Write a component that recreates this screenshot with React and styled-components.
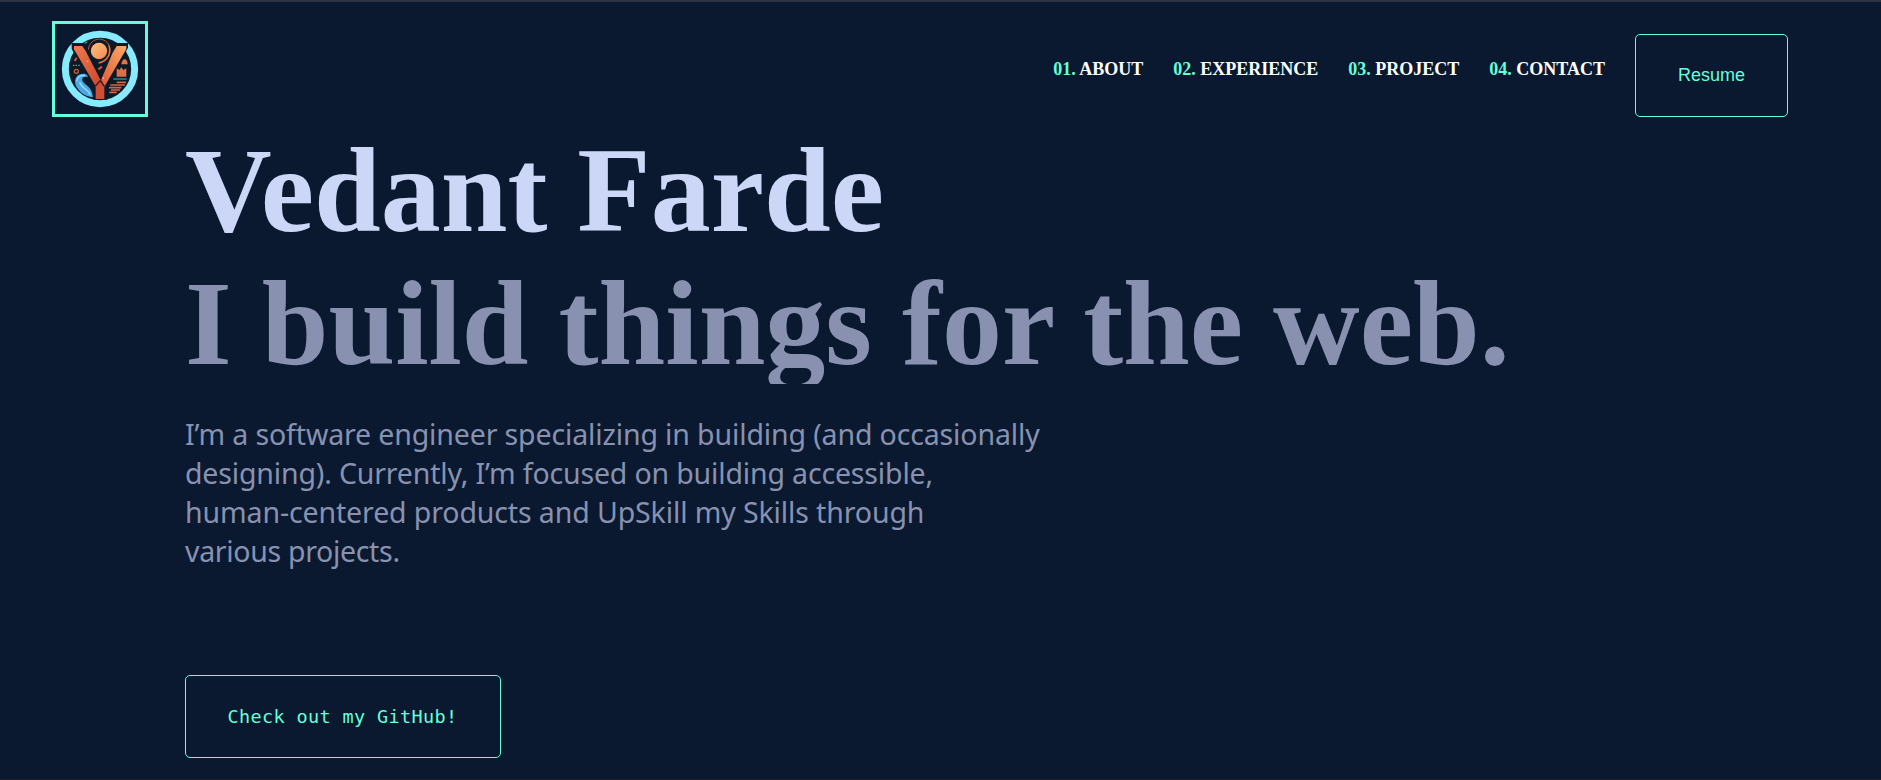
import React from "react";
import styled, { createGlobalStyle } from "styled-components";

const mint = "#64ffda";
const slate = "#8892b0";

const GlobalStyle = createGlobalStyle`
  *, *::before, *::after { box-sizing: border-box; }
  html { background: #0a192f; }
  body { margin: 0; background: #0a192f; overflow: hidden; }
`;

const Page = styled.div`
  height: 780px;
  overflow: hidden;
  border-top: 2px solid #2f3241;
  border-bottom: 1px solid #221f28;
  background: #0a192f;
  font-family: "Liberation Serif", "Times New Roman", serif;
`;

const Header = styled.header`
  display: flex;
  justify-content: space-between;
  align-items: flex-start;
  height: 128px;
  padding: 19px 93px 0 52px;
`;

const LogoFrame = styled.a`
  display: block;
  width: 96px;
  height: 96px;
  border: 3px solid ${mint};
  svg { display: block; width: 90px; height: 90px; }
`;

const Nav = styled.nav`
  display: flex;
  align-items: flex-start;
  gap: 30px;
  padding-top: 13px;
`;

const NavLink = styled.a`
  margin-top: 25px;
  color: #fff;
  font-size: 18px;
  font-weight: 700;
  line-height: 21px;
  white-space: nowrap;
`;

const Num = styled.span`
  color: ${mint};
`;

const OutlineButton = styled.a`
  display: flex;
  align-items: center;
  justify-content: center;
  width: ${(p) => p.$width}px;
  height: 83px;
  border: 1px solid ${mint};
  border-radius: 5px;
  color: ${mint};
  white-space: pre;
`;

const ResumeButton = styled(OutlineButton)`
  font-family: "Liberation Sans", Arial, sans-serif;
  font-size: 18px;
`;

const GithubButton = styled(OutlineButton)`
  margin-top: 104px;
  padding-right: 1px;
  font-family: "DejaVu Sans Mono", monospace;
  font-size: 18.5px;
  letter-spacing: 0.36px;
`;

const Hero = styled.main`
  padding-left: 185px;
`;

const Title = styled.h1`
  margin: 0;
  height: 121px;
  color: #ccd6f6;
  font-size: 120px;
  line-height: 121px;
  white-space: nowrap;
`;

const Subtitle = styled.h2`
  margin: 0;
  height: 133px;
  overflow: hidden;
  color: ${slate};
  font-size: 120px;
  line-height: 145px;
  white-space: nowrap;
`;

const Intro = styled.p`
  margin: 31px 0 0;
  color: ${slate};
  font-family: "Noto Sans", sans-serif;
  font-size: 28.5px;
  line-height: 39px;
`;

const Line = styled.span`
  display: block;
  white-space: nowrap;
  letter-spacing: ${(p) => p.$spacing || 0}px;
`;

function Logo() {
  return (
    <svg viewBox="45 42 270 270" role="img" aria-label="V logo">
      <defs>
        <linearGradient id="armL" x1="0" y1="0" x2="1" y2="1">
          <stop offset="0" stopColor="#f07a4c" />
          <stop offset="1" stopColor="#cf472f" />
        </linearGradient>
        <linearGradient id="armR" x1="1" y1="0" x2="0" y2="1">
          <stop offset="0" stopColor="#fbab68" />
          <stop offset="1" stopColor="#e0583a" />
        </linearGradient>
        <linearGradient id="sun" x1="0" y1="0" x2="1" y2="1">
          <stop offset="0" stopColor="#ffc07c" />
          <stop offset="1" stopColor="#f08a55" />
        </linearGradient>
      </defs>
      <circle cx="180" cy="177" r="104" fill="#0b1a26" stroke="#86ebfc" strokeWidth="21" />
      <path d="M95 99h38l14 24 34 68 32-68 14-24h37v14l-62 118v38h-42v-38L95 117z" fill="#0b1a26" />
      <circle cx="177" cy="123" r="24.5" fill="url(#sun)" />
      <path d="M145 119c2-20 16-31 34-32M180 87c26 3 38 30 26 52-7 13-17 19-29 20" fill="none" stroke="#b9573a" strokeWidth="3" />
      <path d="M207 106c6 24-3 46-31 53" fill="none" stroke="#e07548" strokeWidth="4" />
      <path d="M102 108h25l10 15 45 88-16 16-64-109z" fill="url(#armL)" />
      <path d="M259 108h-29l-12 20-35 82 11 19 65-112z" fill="url(#armR)" />
      <path d="M167 229l13-15 13 15v38h-26z" fill="#d34c34" />
      <path d="M166 228l15-16 12 17" fill="none" stroke="#3a1d24" strokeWidth="4" />
      <path d="M106 222c-3-19 7-31 23-31 11 0 14 5 15 11-11-4-19 1-17 9 4 15 29 15 32 51-25-2-45-18-53-40z" fill="#4aa9e9" />
      <path d="M110 214c2-13 13-20 25-17M119 216c4 19 25 19 32 39" fill="none" stroke="#9addf8" strokeWidth="4" />
      <circle cx="109" cy="184" r="6" fill="none" stroke="#c85d3d" strokeWidth="4" />
      <path d="M99 166h20" stroke="#a7c6c9" strokeWidth="3" strokeDasharray="4 4" />
      <path d="M104 153l6-10M175 178l11-8" stroke="#c9593b" strokeWidth="6" />
      <path d="M134 100l8-4" stroke="#53b8d4" strokeWidth="3" />
      <path d="M244 163c1-12 7-17 12-15 5 2 7 10 7 15z" fill="#db754b" />
      <path d="M230 200v-25l8 5 6-8 6 8 9-5v25z" fill="#d9704a" />
      <path d="M220 207h40" stroke="#4fb5d4" strokeWidth="3" />
      <path d="M230 217h28M211 225h44M207 233h37M213 240h27M208 247h22" stroke="#d9623f" strokeWidth="5" />
      <circle cx="143" cy="154" r="2" fill="#fff1d0" />
      <circle cx="190" cy="204" r="2" fill="#fff1d0" />
    </svg>
  );
}

const links = [
  ["01.", "ABOUT"],
  ["02.", "EXPERIENCE"],
  ["03.", "PROJECT"],
  ["04.", "CONTACT"],
];

const intro = [
  ["I’m a software engineer specializing in building (and occasionally", -0.135],
  ["designing). Currently, I’m focused on building accessible,", -0.16],
  ["human-centered products and UpSkill my Skills through", -0.12],
  ["various projects.", -0.32],
];

export default function App() {
  return (
    <Page>
      <GlobalStyle />
      <Header>
        <LogoFrame><Logo /></LogoFrame>
        <Nav>
          {links.map(([num, label]) => (
            <NavLink key={num}><Num>{num}</Num> {label}</NavLink>
          ))}
          <ResumeButton $width={153}>Resume</ResumeButton>
        </Nav>
      </Header>
      <Hero>
        <Title>Vedant Farde</Title>
        <Subtitle>I build things for the web.</Subtitle>
        <Intro>
          {intro.map(([text, spacing]) => (
            <Line key={text} $spacing={spacing}>{text}</Line>
          ))}
        </Intro>
        <GithubButton $width={316}>Check out my GitHub!</GithubButton>
      </Hero>
    </Page>
  );
}
